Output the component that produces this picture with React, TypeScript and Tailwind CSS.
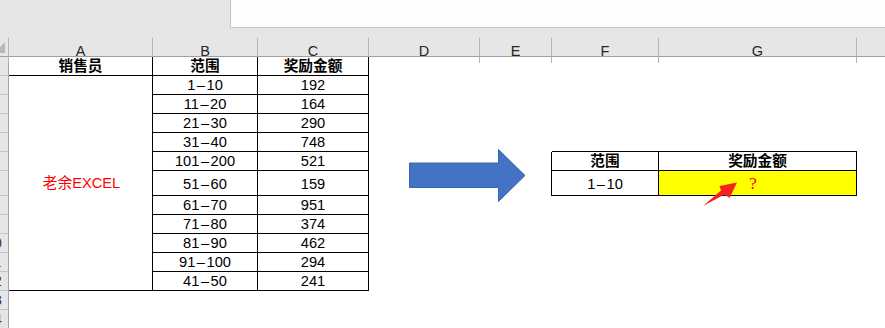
import React from "react";

type CellProps = {
  b?: boolean;
  r?: boolean;
  className?: string;
  children?: React.ReactNode;
};

// A worksheet cell; b / r switch on the black bottom / right cell borders.
function Cell({ b, r, className = "", children }: CellProps) {
  return (
    <div
      className={`flex items-center justify-center overflow-hidden whitespace-nowrap ${
        b ? "border-b border-b-black" : ""
      } ${r ? "border-r border-r-black" : ""} ${className}`}
    >
      {children}
    </div>
  );
}

// Ranges like "1-10" are shown with the wide dash the sheet font uses.
function Range({ v }: { v: string }) {
  const [lo, hi] = v.split("-");
  return (
    <span>
      {lo}
      <span className="mx-[1.5px]">–</span>
      {hi}
    </span>
  );
}

// Row number gutter, scrolled so only the right edge of the numbers shows.
function RowHead({ n }: { n: number }) {
  return (
    <div className="overflow-hidden border-r border-b border-r-[#a3a3a3] border-b-[#c4c4c4] bg-[#e6e6e6]">
      <div className="-ml-[19px] flex h-full w-[26px] items-center justify-center text-[14px] text-[#333]">
        {n}
      </div>
    </div>
  );
}

const data: [string, string][] = [
  ["1-10", "192"],
  ["11-20", "164"],
  ["21-30", "290"],
  ["31-40", "748"],
  ["101-200", "521"],
  ["51-60", "159"],
  ["61-70", "951"],
  ["71-80", "374"],
  ["81-90", "462"],
  ["91-100", "294"],
  ["41-50", "241"],
];

const letters = ["A", "B", "C", "D", "E", "F", "G", ""];

export default function App() {
  const rows: React.ReactNode[] = [];

  // Row 1: table headings
  rows.push(
    <React.Fragment key="r1">
      <RowHead n={1} />
      <Cell b r className="font-bold">销售员</Cell>
      <Cell b r className="font-bold">范围</Cell>
      <Cell b r className="font-bold">奖励金额</Cell>
      <Cell />
      <Cell />
      <Cell />
      <Cell />
      <Cell />
    </React.Fragment>
  );

  data.forEach(([range, amount], i) => {
    const rowNo = i + 2;
    rows.push(
      <React.Fragment key={`r${rowNo}`}>
        <RowHead n={rowNo} />
        {rowNo === 2 && (
          <Cell b r className="row-span-11 pl-[2px] text-[#ff0000]">
            老余EXCEL
          </Cell>
        )}
        <Cell b r className={rowNo === 7 ? "pt-[2px]" : ""}>
          <Range v={range} />
        </Cell>
        <Cell b r className={rowNo === 7 ? "pt-[2px]" : ""}>
          {amount}
        </Cell>
        <Cell />
        <Cell r={rowNo === 6 || rowNo === 7} />
        {rowNo === 5 && (
          <>
            <Cell b />
            <Cell b />
          </>
        )}
        {rowNo === 6 && (
          <>
            <Cell b r className="font-bold">范围</Cell>
            <Cell b r className="font-bold">奖励金额</Cell>
          </>
        )}
        {rowNo === 7 && (
          <>
            <Cell b r className="pt-[2px]">
              <Range v="1-10" />
            </Cell>
            <Cell b r className="bg-[#ffff00] pr-[9px] pt-[1px]">
              <span className="font-['Liberation_Serif',serif] text-[17px] leading-none text-[#ff0000]">?</span>
            </Cell>
          </>
        )}
        {rowNo !== 5 && rowNo !== 6 && rowNo !== 7 && (
          <>
            <Cell />
            <Cell />
          </>
        )}
        <Cell />
      </React.Fragment>
    );
  });

  [13, 14].forEach((n) => {
    rows.push(
      <React.Fragment key={`r${n}`}>
        <RowHead n={n} />
        <Cell />
        <Cell />
        <Cell />
        <Cell />
        <Cell />
        <Cell />
        <Cell />
        <Cell />
      </React.Fragment>
    );
  });

  return (
    <div className="relative h-[328px] w-[885px] overflow-hidden bg-white font-['Liberation_Sans','Noto_Sans_CJK_SC',sans-serif] text-[14.67px] text-black">
      {/* formula bar strip */}
      <div className="flex h-[28px] bg-[#e6e6e6]">
        <div className="w-[230px]" />
        <div className="flex-1 border-b border-l border-[#c6c6c6] bg-[#fdfdfd]" />
      </div>
      <div className="h-[10px] bg-[#e6e6e6]" />

      {/* column letters */}
      <div className="grid h-[19px] grid-cols-[9px_144px_105px_111px_111px_72px_107px_198px_1fr] border-b border-b-[#9f9f9f] bg-[#e6e6e6]">
        <div className="relative border-r border-r-[#b5b5b5]">
          <svg className="absolute left-0 top-[4px]" width="5" height="11" viewBox="0 0 5 11">
            <polygon points="5,0 5,11 0,11 0,5" fill="#b8b8b8" />
          </svg>
        </div>
        {letters.map((l, i) => (
          <div
            key={i}
            className={`flex items-center justify-center pt-[3px] text-[14.5px] text-[#262626] ${
              i < 7 ? "border-r border-r-[#b5b5b5]" : ""
            }`}
          >
            {l}
          </div>
        ))}
      </div>

      {/* sheet cells */}
      <div className="grid grid-cols-[9px_144px_105px_111px_111px_72px_107px_198px_1fr] grid-rows-[19px_19px_19px_19px_19px_19px_25px_19px_19px_19px_19px_19px_19px_19px]">
        {rows}
      </div>

      {/* block arrow shape */}
      <svg className="absolute left-[408px] top-[148px]" width="119" height="55" viewBox="0 0 119 55">
        <polygon
          points="1.5,15 90.5,15 90.5,1.5 117,27.5 90.5,53.5 90.5,39.5 1.5,39.5"
          fill="#4472c4"
          stroke="#3b64ae"
          strokeWidth="1"
        />
      </svg>

      {/* red pointer arrow */}
      <svg className="absolute left-[700px] top-[178px]" width="40" height="32" viewBox="0 0 40 32">
        <polygon points="3,28 21,12.5 19.5,8 37,4.5 29.5,20 24.5,16.5" fill="#f5221b" />
      </svg>
    </div>
  );
}
